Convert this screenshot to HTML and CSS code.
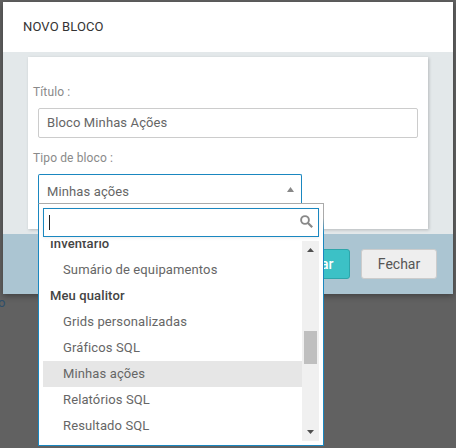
FILE: index.html
```html
<!DOCTYPE html>
<html lang="pt-BR">
<head>
  <meta charset="UTF-8">
  <title>Novo bloco</title>
  <link rel="stylesheet" href="styles.css">
</head>
<body>
  <div class="page-link">o</div>

  <div class="modal">
    <div class="modal-header">NOVO BLOCO</div>
    <div class="modal-body">
      <div class="card">
        <label class="label">Título :</label>
        <div class="input">Bloco Minhas Ações</div>
        <label class="label label-tipo">Tipo de bloco :</label>
        <div class="select">
          <span>Minhas ações</span>
          <svg class="arrow-up" width="7" height="5" viewBox="0 0 7 5"><path d="M3.5 0 7 5H0z" fill="#888"/></svg>
        </div>
      </div>
    </div>
    <div class="modal-footer">
      <button class="btn btn-save">Salvar</button>
      <button class="btn btn-close">Fechar</button>
    </div>
  </div>

  <!-- Dropdown aberto do select -->
  <div class="dropdown">
    <div class="search">
      <span class="caret"></span>
      <svg class="search-icon" width="13" height="13" viewBox="0 0 13 13"><circle cx="5" cy="5" r="3.9" fill="none" stroke="#888" stroke-width="1.9"/><path d="M8 8 12.2 12.2" stroke="#888" stroke-width="2.2"/></svg>
    </div>
    <div class="list">
      <div class="options">
        <div class="group group-cut">Inventário</div>
        <div class="option">Sumário de equipamentos</div>
        <div class="group">Meu qualitor</div>
        <div class="option">Grids personalizadas</div>
        <div class="option">Gráficos SQL</div>
        <div class="option selected">Minhas ações</div>
        <div class="option">Relatórios SQL</div>
        <div class="option">Resultado SQL</div>
      </div>
      <div class="scrollbar">
        <svg width="7" height="4" viewBox="0 0 7 4"><path d="M3.5 0 7 4H0z" fill="#505050"/></svg>
        <div class="thumb"></div>
        <svg width="7" height="4" viewBox="0 0 7 4"><path d="M0 0h7L3.5 4z" fill="#505050"/></svg>
      </div>
    </div>
  </div>
</body>
</html>
```

FILE: styles.css
```css
html, body {
  margin: 0;
  height: 100%;
}
body {
  width: 456px;
  height: 448px;
  overflow: hidden;
  background-color: #616161;
  font-family: Roboto, sans-serif;
  font-size: 13px;
  letter-spacing: 0.12px;
  color: #666;
  position: relative;
  padding-top: 2px;
  box-sizing: border-box;
}
.page-link {
  position: absolute;
  left: -2px;
  top: 295px;
  color: #2f4f6b;
  font-size: 13px;
}
.modal {
  margin-left: 3px;
  width: 450px;
  position: relative;
  box-shadow: 0 2px 6px rgba(0, 0, 0, 0.35);
}
.modal-header {
  height: 50px;
  padding-left: 20px;
  line-height: 50px;
  background-color: #fff;
  color: #333;
}
.modal-body {
  height: 182px;
  padding: 5px 25px 0;
  background-color: #e3e8ea;
  box-sizing: border-box;
}
.card {
  width: 400px;
  height: 172px;
  padding: 27px 10px 0 5px;
  box-sizing: border-box;
  background-color: #fff;
  box-shadow: 1px 1px 3px rgba(0, 0, 0, 0.2);
}
.label {
  display: block;
  color: #8a8a8a;
  font-size: 12px;
  line-height: 16px;
}
.label-tipo {
  margin-top: 12px;
}
.input {
  margin: 8px 0 0 5px;
  height: 30px;
  padding-left: 8px;
  line-height: 28px;
  box-sizing: border-box;
  border: 1px solid #ccc;
  border-radius: 2px;
}
.select {
  margin: 8px 0 0 5px;
  width: 264px;
  height: 29px;
  padding-left: 8px;
  line-height: 33px;
  box-sizing: border-box;
  border: 1px solid #1a87c0;
  border-bottom: none;
  border-radius: 2px 2px 0 0;
  position: relative;
}
.arrow-up {
  position: absolute;
  right: 7px;
  top: 12px;
}
.modal-footer {
  height: 60px;
  display: flex;
  justify-content: flex-end;
  align-items: center;
  gap: 11px;
  padding-right: 16px;
  box-sizing: border-box;
  background-color: #abc5d2;
}
.btn {
  height: 30px;
  font-family: Roboto, sans-serif;
  font-size: 14px;
  border-radius: 3px;
  padding: 0;
}
.btn-save {
  width: 72px;
  background-color: #3cc1c6;
  border: 1px solid #2ea5aa;
  color: #fff;
  font-weight: 500;
}
.btn-close {
  width: 76px;
  background-color: #eee;
  border: 1px solid #ccc;
  color: #555;
}
/* o dropdown fica por cima do modal */
.dropdown {
  position: absolute;
  left: 38px;
  top: 203px;
  width: 286px;
  height: 243px;
  padding: 4px;
  box-sizing: border-box;
  background-color: #fff;
  border: 1px solid #1a87c0;
  border-top-color: #aaa;
}
/* a borda direita começa cinza e passa para azul */
.dropdown::after {
  content: "";
  position: absolute;
  top: -1px;
  right: -1px;
  width: 1px;
  height: 30px;
  background: linear-gradient(#aaa 50%, #1a87c0);
}
.search {
  height: 29px;
  border: 1px solid #1a87c0;
  box-sizing: border-box;
  position: relative;
  box-shadow: 0 1px 3px rgba(0, 0, 0, 0.08);
}
.caret {
  position: absolute;
  left: 5px;
  top: 6px;
  width: 1px;
  height: 15px;
  background-color: #222;
}
.search-icon {
  position: absolute;
  right: 5px;
  top: 6px;
}
.list {
  display: flex;
  height: 200px;
  margin-top: 4px;
  overflow: hidden;
}
.options {
  flex: 1;
  overflow: hidden;
}
.group {
  height: 26px;
  line-height: 26px;
  padding-left: 7px;
  color: #444;
  font-weight: 500;
}
.group-cut {
  margin-top: -10px;
}
.option {
  height: 26px;
  line-height: 26px;
  padding-left: 20px;
}
.selected {
  background-color: #e6e6e6;
}
.scrollbar {
  width: 17px;
  background-color: #f0f0f0;
  position: relative;
  display: flex;
  justify-content: center;
}
.scrollbar svg {
  position: absolute;
  top: 7px;
}
.scrollbar svg:last-child {
  top: auto;
  bottom: 7px;
}
.thumb {
  position: absolute;
  top: 90px;
  left: 2px;
  width: 13px;
  height: 33px;
  background-color: #bfbfbf;
}
```
